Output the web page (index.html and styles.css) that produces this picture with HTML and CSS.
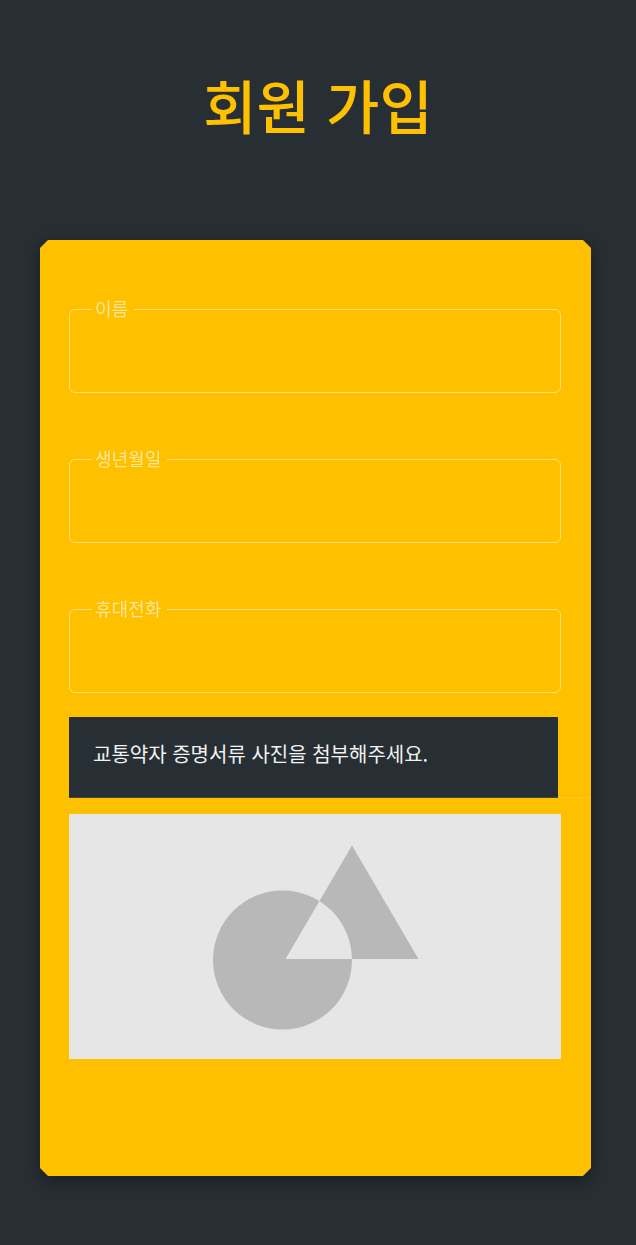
FILE: index.html
```html
<!DOCTYPE html>
<html lang="ko">
<head>
<meta charset="utf-8">
<meta name="viewport" content="width=device-width, initial-scale=1">
<title>회원 가입</title>
<link rel="stylesheet" href="styles.css">
</head>
<body>
<main class="page">
  <h1 class="title">회원 가입</h1>
  <div class="card-shadow">
    <form class="card">
      <div class="fields">
        <fieldset class="field">
          <legend class="field-legend"><label for="name">이름</label></legend>
          <input class="field-input" id="name" type="text">
        </fieldset>
        <fieldset class="field">
          <legend class="field-legend"><label for="birth">생년월일</label></legend>
          <input class="field-input" id="birth" type="text">
        </fieldset>
        <fieldset class="field">
          <legend class="field-legend"><label for="phone">휴대전화</label></legend>
          <input class="field-input" id="phone" type="tel">
        </fieldset>
      </div>
      <div class="notice-row">
        <p class="notice">교통약자 증명서류 사진을 첨부해주세요.</p>
      </div>
      <div class="photo">
        <svg class="photo-art" viewBox="0 0 492 245" role="img" aria-label="사진">
          <path fill-rule="evenodd" d="M144 146a69.5 69.5 0 1 0 139 0a69.5 69.5 0 1 0 -139 0ZM283 31.500L349.500 145H216.500Z"/>
        </svg>
      </div>
    </form>
  </div>
</main>
</body>
</html>
```
FILE: styles.css
```css
* {
  box-sizing: border-box;
}

body {
  margin: 0;
  background: #272f34;
  font-family: "Noto Sans CJK KR", sans-serif;
}

.page {
  padding: 60px 0 69px;
}

.title {
  margin: 0 0 92px;
  color: #ffc000;
  font-size: 58px;
  font-weight: 500;
  line-height: 88px;
  text-align: center;
}

.card-shadow {
  margin: 0 45px 0 40px;
  filter: drop-shadow(0 5px 8px rgba(0, 0, 0, 0.4));
}

.card {
  padding: 59px 30px 117px 29px;
  background: #ffc000;
  clip-path: polygon(8px 0, calc(100% - 8px) 0, 100% 8px, 100% calc(100% - 8px), calc(100% - 8px) 100%, 8px 100%, 0 calc(100% - 8px), 0 8px);
}

.fields {
  display: flex;
  flex-direction: column;
  gap: 56px;
}

.field {
  min-width: 0;
  margin: 0;
  padding: 0 22px;
  border: 1px solid #ffe07a;
  border-radius: 6px;
}

.field-legend {
  padding: 0 6px 2px 3px;
  color: #ffe699;
  font-size: 18px;
  line-height: 18px;
}

.field-input {
  display: block;
  width: 100%;
  height: 73px;
  padding: 0;
  border: 0;
  outline: 0;
  background: transparent;
  color: #272f34;
  font: inherit;
  font-size: 20px;
}

.notice-row {
  position: relative;
  margin: 24px -29px 16px 0;
  padding-right: 32px;
}

.notice-row::after {
  content: "";
  position: absolute;
  right: 0;
  bottom: 0;
  left: 0;
  height: 1px;
  background: rgba(255, 255, 255, 0.12);
}

.notice {
  margin: 0;
  padding: 22px 24px 29px;
  background: #272f34;
  color: #f2f2f2;
  font-size: 20px;
  line-height: 30px;
}

.photo {
  background: #e6e6e6;
}

.photo-art {
  display: block;
  width: 100%;
  fill: #b8b8b8;
}
```
